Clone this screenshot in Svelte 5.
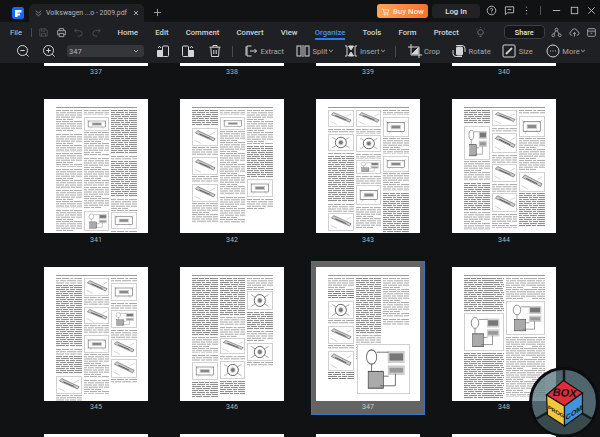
<script>
  // t = text, d = dense text, f = figure with a drawing kind
  const t = (h) => ({ type: "t", h })
  const d = (h) => ({ type: "d", h })
  const f = (h, kind = "box") => ({ type: "f", h, kind })

  const tabs = ["Home", "Edit", "Comment", "Convert", "View", "Organize", "Tools", "Form", "Protect"]

  const pages = [
    { n: 337, cols: [] }, { n: 338, cols: [] }, { n: 339, cols: [] }, { n: 340, cols: [] },
    { n: 341, cols: [
      [t(22), t(18), t(14), t(20), t(18), t(22)],
      [t(5), f(14, "panel"), t(24), t(28), t(22), f(20, "diagram")],
      [d(44), t(4), d(36), t(12), f(17, "panel"), t(10)],
    ] },
    { n: 342, cols: [
      [d(16), f(18, "bar"), t(8), f(18, "bar"), t(6), f(18, "bar"), t(20)],
      [t(5), f(13, "panel"), t(64), t(26)],
      [t(34), d(32), f(18, "panel"), t(10)],
    ] },
    { n: 343, cols: [
      [f(17, "bar"), t(4), f(17, "circle"), t(2), d(46), t(8), f(18, "bar"), t(8)],
      [f(17, "bar"), t(5), f(17, "circle"), t(5), f(14, "diagram"), t(8), f(20, "panel"), t(22)],
      [t(5), f(20, "panel"), t(16), f(16, "panel"), t(18), d(42)],
    ] },
    { n: 344, cols: [
      [d(14), f(34, "diagram"), t(20), d(28), t(18)],
      [f(16, "bar"), t(4), f(20, "bar"), t(8), f(18, "bar"), t(8), f(19, "bar"), t(14)],
      [t(4), f(21, "panel"), t(32), f(20, "bar"), d(34)],
    ] },
    { n: 345, cols: [
      [t(6), d(62), t(6), d(18), f(18, "bar"), t(14)],
      [f(18, "bar"), t(8), f(17, "bar"), t(8), f(18, "panel"), t(24), t(14)],
      [t(4), f(18, "panel"), t(6), f(18, "diagram"), t(8), f(18, "bar"), f(19, "bar"), t(4)],
    ] },
    { n: 346, cols: [
      [d(58), t(16), t(6), f(18, "panel"), d(16)],
      [d(38), t(8), t(10), f(16, "bar"), t(4), f(18, "circle"), d(14)],
      [t(12), f(19, "circle"), d(18), t(10), f(18, "circle"), t(4)],
    ] },
    { n: 347, sel: true, cols: [
      [t(12), d(8), f(18, "circle"), t(4), f(18, "bar"), t(4), f(20, "bar"), d(8)],
      [d(56), t(10), t(12)],
      [t(12), t(26), t(6)],
    ], wide: f(50, "diagram") },
    { n: 348, cols: [
      [d(34), f(38, "diagram"), d(46)],
      [t(22), f(34, "diagram"), t(60)],
    ] },
    { cols: [] }, { cols: [] }, { cols: [] }, { cols: [] },
  ]
</script>

{#snippet drawing(kind)}
  <svg class="fig" viewBox="0 0 30 20" preserveAspectRatio="none">
    {#if kind === "panel"}
      <rect x="4" y="5" width="22" height="10" fill="none" stroke="#555" stroke-width=".7" />
      <rect x="9" y="8" width="12" height="4" fill="#888" />
      <path d="M2 3l5 4M28 3l-5 4M6 18l3-4M24 18l-3-4" stroke="#888" stroke-width=".4" />
    {:else if kind === "bar"}
      <path d="M3 5L26 15l2-3L6 2z" fill="#ccc" stroke="#444" stroke-width=".6" />
      <path d="M8 6l14 6" stroke="#444" stroke-width="1" />
      <path d="M2 14l8 4M28 4l-6 3" stroke="#777" stroke-width=".4" />
    {:else if kind === "circle"}
      <circle cx="15" cy="10" r="7" fill="none" stroke="#444" stroke-width="1" />
      <circle cx="15" cy="10" r="3" fill="#777" />
      <path d="M4 3l5 3M26 3l-5 3M4 17l5-3M26 17l-5-3" stroke="#555" stroke-width=".6" />
    {:else}
      <circle cx="8" cy="5" r="3" fill="none" stroke="#666" stroke-width=".5" />
      <rect x="18" y="3" width="9" height="4" fill="#777" />
      <rect x="18" y="9" width="9" height="3" fill="#999" />
      <rect x="6" y="11" width="9" height="7" fill="#aaa" stroke="#444" stroke-width=".4" />
      <path d="M8 8v3M15 13h3M22 12v5H13M11 3h7" fill="none" stroke="#555" stroke-width=".4" />
    {/if}
  </svg>
{/snippet}

<div class="app">
  <header class="titlebar">
    <svg class="logo" viewBox="0 0 12 12"><rect width="12" height="12" rx="2.5" fill="#1668f5" /><path d="M3 3h6.500v2.600H5.600v1H8v2H5.600V10H3z" fill="#fff" /></svg>
    <div class="tab">
      <svg class="ic10" viewBox="0 0 10 10"><path d="M2 2l3 2.500L8 2M2 5l3 2.500L8 5" /></svg>
      <span class="tabname">Volkswagen ...o - 2009.pdf</span>
      <svg class="ic8" viewBox="0 0 8 8"><path d="M2 2l4 4M6 2L2 6" /></svg>
    </div>
    <svg class="plus" viewBox="0 0 10 10"><path d="M5 1v8M1 5h8" /></svg>
    <div class="spacer"></div>
    <button class="buy">
      <svg viewBox="0 0 10 10"><path d="M1 2h1.400l1 4.500h4.300L8.800 3H2.800" /><circle cx="4" cy="8.300" r=".7" /><circle cx="7.300" cy="8.300" r=".7" /></svg>
      Buy Now
    </button>
    <button class="login">Log In</button>
    <div class="winicons">
      <svg viewBox="0 0 12 12"><circle cx="6" cy="6" r="4.700" /><path d="M4.700 4.800A1.300 1.300 0 1 1 6 6.300V7M6 8.300v.7" /></svg>
      <svg viewBox="0 0 12 12"><path d="M1.500 2h9v6.500H4L1.500 10.500zM4 5h4" /></svg>
      <svg viewBox="0 0 12 12"><path d="M6 1.800v1M6 5.500v1M6 9.200v1" stroke-width="1.300" /></svg>
      <i class="winsep"></i>
      <svg viewBox="0 0 12 12"><path d="M2 6h8" /></svg>
      <svg viewBox="0 0 12 12"><rect x="2.500" y="2.500" width="7" height="7" /></svg>
      <svg viewBox="0 0 12 12"><path d="M2.500 2.500l7 7M9.500 2.500l-7 7" /></svg>
    </div>
  </header>

  <div class="menubar">
    <span class="file">File</span>
    <i class="sep short"></i>
    <div class="quick">
      <svg viewBox="0 0 12 12"><path d="M2 2h6.500L10 3.500V10H2zM4 2v2.500h3.500V2M4 10V7h4v3" /></svg>
      <svg class="on" viewBox="0 0 12 12"><path d="M3.500 4V1.800h5V4M3.500 8.500H1.800V4h8.400v4.500H8.500M3.500 7h5v3.500h-5z" /></svg>
      <svg viewBox="0 0 12 12"><path d="M4 2L2 4l2 2M2 4h5a2.500 2.500 0 0 1 0 6H5" /></svg>
      <svg viewBox="0 0 12 12"><path d="M8 2l2 2-2 2M10 4H5a2.500 2.500 0 0 0 0 6h2" /></svg>
    </div>
    <nav class="tabs">
      {#each tabs as name}
        <span class:active={name === "Organize"}>{name}</span>
      {/each}
    </nav>
    <svg class="bulb" viewBox="0 0 12 12"><path d="M4.500 8.500a3 3 0 1 1 3 0zM5 10.300h2M6 .4v.6M1.400 2l.6.5M10.600 2l-.6.5" /></svg>
    <button class="share">Share</button>
    <div class="rightic">
      <svg viewBox="0 0 12 12"><circle cx="6" cy="2.800" r="1.500" /><circle cx="2.500" cy="9" r="1.500" /><circle cx="9.500" cy="9" r="1.500" /><path d="M5.200 4L3.200 7.700M6.800 4l2 3.700" /></svg>
      <svg viewBox="0 0 12 12"><path d="M3.500 9H3a2.300 2.300 0 0 1-.3-4.500 3.300 3.300 0 0 1 6.400 0A2.300 2.300 0 0 1 9 9h-.5M6 10.500V6M4.300 7.500L6 6l1.700 1.500" /></svg>
      <svg viewBox="0 0 12 12"><rect x="1.800" y="1.800" width="8.400" height="8.400" rx="1" /><path d="M1.800 4.500h8.400M5 6.800h2" /></svg>
    </div>
  </div>

  <div class="toolbar">
    <svg class="tool zoomout" viewBox="0 0 14 14"><circle cx="6.500" cy="6.500" r="5" /><path d="M4.300 6.500h4.400M10.200 10.200l2.300 2.300" /></svg>
    <svg class="tool zoomin" viewBox="0 0 14 14"><circle cx="6.500" cy="6.500" r="5" /><path d="M4.300 6.500h4.400M6.500 4.300v4.400M10.200 10.200l2.300 2.300" /></svg>
    <div class="pagesel">
      <span>347</span>
      <svg viewBox="0 0 8 8"><path d="M2 3l2 2 2-2" /></svg>
    </div>
    <svg class="tool rot1" viewBox="0 0 14 14"><rect x="6.500" y="2" width="6" height="10.500" rx="1" /><path d="M1.500 6.500h5v6h-5z" fill="#d5d5d5" /><path d="M2 4l1.500-1.800L5 4" /></svg>
    <svg class="tool rot2" viewBox="0 0 14 14"><rect x="1.500" y="2" width="6" height="10.500" rx="1" /><path d="M7.500 6.500h5v6h-5z" fill="#d5d5d5" /><path d="M9 4l1.500-1.800L12 4" /></svg>
    <svg class="tool trash" viewBox="0 0 14 14"><path d="M1.500 3.200h11M5 3V1.500h4V3M2.800 3.500l.7 9h7l.7-9M5.800 6v4M8.200 6v4" /></svg>
    <i class="sep tall first"></i>
    <div class="action extract">
      <svg viewBox="0 0 14 14"><path d="M7.500 2H3v10h4.500M2 2.500v9" /><path d="M6 7h6.500M10.500 5l2 2-2 2" /></svg><span>Extract</span>
    </div>
    <div class="action split">
      <svg viewBox="0 0 14 14"><rect x="1" y="2" width="4" height="10" /><rect x="9" y="2" width="4" height="10" /><path d="M7 1v12" /></svg><span>Split</span><b></b>
    </div>
    <div class="action insert">
      <svg viewBox="0 0 14 14"><path d="M1 2h2v10H1M13 2h-2v10h2" /><path d="M4.500 2h5L7 6zM4.500 12h5L7 8z" fill="#d5d5d5" /></svg><span>Insert</span><b></b>
    </div>
    <i class="sep tall"></i>
    <div class="action crop">
      <svg viewBox="0 0 14 14"><path d="M3 0v11h11M0 3h11v11" /><path d="M4 10l6-6v6z" fill="#d5d5d5" /></svg><span>Crop</span>
    </div>
    <div class="action rotate">
      <svg viewBox="0 0 14 14"><rect x="4.500" y="3" width="6" height="8" rx="1" fill="#d5d5d5" /><path d="M4 1.500h6a3 3 0 0 1 3 3V8M10 12.500H4a3 3 0 0 1-3-3V6" /></svg><span>Rotate</span>
    </div>
    <div class="action size">
      <svg viewBox="0 0 14 14"><rect x="1" y="1" width="12" height="12" rx="1" /><path d="M4 10l6-6" stroke-width="1.800" /></svg><span>Size</span>
    </div>
    <div class="action more">
      <svg viewBox="0 0 14 14"><circle cx="7" cy="7" r="6" /><path d="M4 7h.6M6.700 7h.6M9.400 7h.6" stroke-width="1.600" /></svg><span>More</span><b></b>
    </div>
  </div>

  <main class="content">
    <div class="grid">
      {#each pages as page}
        <div class="cell" class:selected={page.sel}>
          <div class="page">
            {#if page.cols.length}
              <div class="pagehead"></div>
              <div class="body">
                {#each page.cols as col}
                  <div class="col">
                    {#each col as block}
                      {#if block.type === "f"}
                        <div class="block figure" style="height: {block.h}px">{@render drawing(block.kind)}</div>
                      {:else}
                        <div class="block {block.type === 'd' ? 'dense' : 'text'}" style="height: {block.h}px"></div>
                      {/if}
                    {/each}
                  </div>
                {/each}
              </div>
              {#if page.wide}
                <div class="block figure wide">{@render drawing(page.wide.kind)}</div>
              {/if}
            {/if}
          </div>
          {#if page.n}
            <span class="num">{page.n}</span>
          {/if}
        </div>
      {/each}
    </div>
  </main>

  <svg class="badge" viewBox="0 0 70 70">
    <circle cx="35" cy="35" r="33.500" fill="#5f7c84" fill-opacity=".8" stroke="#0c0c0e" stroke-width="3" />
    <path d="M35 36L7 52A33 33 0 0 0 63 52z" fill="#39494d" />
    <path d="M35 36V2M35 36L7 52M35 36L63 52" stroke="#15191b" stroke-width="2.500" />
    <path d="M34.500 13.500L53.500 26 35.500 39 17.500 28z" fill="#e02d3c" stroke="#111" stroke-width="1.200" />
    <path d="M17.500 28L35.500 39V59L18.500 48z" fill="#f0c93a" stroke="#111" stroke-width="1.200" />
    <path d="M53.500 26L35.500 39V59L53.500 46z" fill="#3d96dc" stroke="#111" stroke-width="1.200" />
    <text class="bx" transform="translate(35 29.500) rotate(4) skewX(-8)" text-anchor="middle">BOX</text>
    <text class="pr" transform="translate(27 46.500) skewY(30)" text-anchor="middle">PROG</text>
    <text class="cm" transform="translate(45 48) skewY(-34)" text-anchor="middle">COM</text>
  </svg>
</div>

<style>
  :global(body) {
    margin: 0;
    background: #111214;
    font-family: Roboto, "Liberation Sans", sans-serif;
  }

  .app {
    position: relative;
    width: 600px;
    height: 437px;
    overflow: hidden;
    display: flex;
    flex-direction: column;
    color: #d8d8d8;
  }

  svg {
    fill: none;
    stroke: #cfcfcf;
    stroke-width: 1;
    flex: none;
  }

  button {
    font: inherit;
    border: none;
    padding: 0;
  }

  .titlebar {
    height: 22px;
    flex: none;
    display: flex;
    align-items: flex-end;
    background: #111214;
    box-sizing: border-box;
  }

  .logo {
    width: 12px;
    height: 12px;
    margin: 0 5px 3px 12px;
    stroke: none;
  }

  .tab {
    width: 115px;
    height: 18px;
    background: #1f2024;
    border-radius: 5px 5px 0 0;
    display: flex;
    align-items: center;
    padding: 0 4px 0 5px;
    box-sizing: border-box;
  }

  .ic10 {
    width: 9px;
    height: 9px;
    stroke: #888;
  }

  .ic8 {
    width: 8px;
    height: 8px;
    stroke: #aaa;
  }

  .tabname {
    flex: 1;
    font-size: 6.900px;
    color: #b4b4b4;
    margin-left: 3px;
    white-space: nowrap;
  }

  .plus {
    width: 9px;
    height: 9px;
    margin: 0 0 5px 9px;
    stroke: #aaa;
  }

  .spacer {
    flex: 1;
  }

  .buy,
  .login {
    align-self: flex-start;
    margin-top: 4px;
    height: 14px;
    border-radius: 3px;
    font-size: 7.800px;
    font-weight: 500;
    display: flex;
    align-items: center;
    justify-content: center;
  }

  .buy {
    width: 51px;
    gap: 3px;
    color: #ffe9d6;
    background: linear-gradient(90deg, #ffa45a, #f5722d);
  }

  .buy svg {
    width: 9px;
    height: 9px;
    stroke: #ffe9d6;
  }

  .login {
    width: 48px;
    margin-left: 4px;
    margin-right: 5px;
    color: #e0e0e0;
    background: #212225;
  }

  .winicons {
    align-self: flex-start;
    margin-top: 5px;
    display: flex;
    align-items: center;
    width: 115px;
    gap: 6.500px;
    padding-left: 1px;
    box-sizing: border-box;
  }

  .winicons svg {
    width: 11px;
    height: 11px;
    stroke: #bdbdbd;
  }

  .winsep {
    width: 1px;
    height: 9px;
    background: #555;
    margin: 0 4px 0 1px;
  }

  .menubar {
    height: 18px;
    flex: none;
    display: flex;
    align-items: center;
    background: #1f2024;
    font-size: 7.700px;
    font-weight: 500;
    padding-top: 2px;
    box-sizing: border-box;
  }

  .file {
    margin-left: 10px;
    color: #c8c8c8;
    font-weight: 400;
    width: 21px;
    flex: none;
  }

  .sep {
    display: block;
    width: 1px;
    background: #4a4b4f;
    flex: none;
  }

  .sep.short {
    height: 9px;
  }

  .quick {
    display: flex;
    gap: 6.500px;
    margin-left: 6px;
    flex: none;
  }

  .quick svg {
    width: 11px;
    height: 11px;
    stroke: #4e4f53;
  }

  .quick svg.on {
    stroke: #a8a8a8;
  }

  .tabs {
    display: flex;
    gap: 17.200px;
    margin-left: 16px;
    color: #d4d4d4;
    flex: none;
  }

  .tabs span {
    position: relative;
  }

  .tabs .active {
    color: #4a90f0;
  }

  .tabs .active::after {
    content: "";
    position: absolute;
    left: 0;
    right: 0;
    bottom: -3px;
    height: 2px;
    background: #2f7be6;
  }

  .bulb {
    width: 11px;
    height: 11px;
    margin-left: 16.500px;
    stroke: #777;
  }

  .share {
    width: 41px;
    height: 14px;
    margin-left: 17.500px;
    background: #141518;
    color: #e4e4e4;
    border: 1px solid #3c3d41;
    border-radius: 4px;
    font-size: 7.300px;
    font-weight: 500;
    flex: none;
  }

  .rightic {
    display: flex;
    gap: 6.500px;
    margin-left: 6.500px;
    flex: none;
  }

  .rightic svg {
    width: 11px;
    height: 11px;
    stroke: #a5a5a5;
  }

  .toolbar {
    height: 23px;
    flex: none;
    display: flex;
    align-items: center;
    background: #1f2024;
    font-size: 7.600px;
    padding-bottom: 1px;
    box-sizing: border-box;
  }

  .tool {
    width: 14px;
    height: 14px;
    stroke: #d5d5d5;
  }

  .zoomout {
    margin-left: 16px;
  }

  .zoomin {
    margin-left: 12px;
  }

  .pagesel {
    width: 77px;
    height: 12px;
    margin: 0 11px 0 11px;
    background: #35363a;
    border-radius: 3px;
    display: flex;
    align-items: center;
    justify-content: space-between;
    padding: 0 4px 0 2px;
    box-sizing: border-box;
    font-size: 7.500px;
    color: #b5b5b5;
    flex: none;
  }

  .pagesel svg {
    width: 8px;
    height: 8px;
    stroke: #999;
  }

  .rot1 {
    margin-left: 1px;
  }

  .rot2 {
    margin-left: 11px;
  }

  .trash {
    margin-left: 13px;
  }

  .sep.tall {
    height: 11px;
    margin: 0 12px 0 9.500px;
  }

  .sep.tall.first {
    margin: 0 11px 0 10px;
  }

  .action {
    display: flex;
    align-items: center;
    gap: 2.500px;
    color: #a9a9a9;
    flex: none;
  }

  .action svg {
    width: 14px;
    height: 14px;
    stroke: #d5d5d5;
  }

  .action b {
    width: 3px;
    height: 3px;
    margin: -2px 0 0 -1px;
    border-right: 1px solid #999;
    border-bottom: 1px solid #999;
    transform: rotate(45deg) scale(0.8);
  }

  .split {
    margin-left: 12px;
  }

  .insert {
    margin-left: 10.500px;
  }

  .rotate {
    margin-left: 12px;
  }

  .size {
    margin-left: 11.500px;
  }

  .more {
    margin-left: 13px;
  }

  .content {
    flex: 1;
    overflow: hidden;
    background: #111214;
  }

  .grid {
    display: grid;
    grid-template-columns: repeat(4, 114px);
    grid-auto-rows: 154px;
    column-gap: 22px;
    row-gap: 13.500px;
    margin: -137.500px 0 0 39px;
  }

  .cell {
    box-sizing: border-box;
    border: 1px solid transparent;
    padding: 5px 4px 0;
    display: flex;
    flex-direction: column;
    align-items: center;
  }

  .cell.selected {
    background: #646464;
    border-color: #3d73c4;
  }

  .page {
    position: relative;
    width: 104px;
    height: 134px;
    background: #fff;
    flex: none;
    box-sizing: border-box;
    padding: 6px 11px 0 12px;
    overflow: hidden;
  }

  .pagehead {
    height: 2px;
    border-bottom: 1px solid #999;
  }

  .body {
    display: flex;
    gap: 2px;
    margin-top: 2px;
    filter: blur(0.35px);
  }

  .col {
    flex: 1;
    min-width: 0;
    display: flex;
    flex-direction: column;
    gap: 1.500px;
  }

  .block {
    flex: none;
    box-sizing: border-box;
  }

  /* small repeating tiles of broken lines, reads as greeked text at thumbnail scale */
  .text {
    background: url("data:image/svg+xml,%3Csvg xmlns='http://www.w3.org/2000/svg' width='26' height='11'%3E%3Cg stroke='%23a8a8a8' stroke-width='1' fill='none'%3E%3Cpath d='M0 .6h26' stroke-dasharray='5 1 7 1 3 1 8 0'/%3E%3Cpath d='M0 2.800h26' stroke-dasharray='3 1 6 1 9 1 5 0'/%3E%3Cpath d='M0 5h26' stroke-dasharray='8 1 4 1 6 1 5 0'/%3E%3Cpath d='M0 7.200h26' stroke-dasharray='4 1 9 1 4 1 6 0'/%3E%3Cpath d='M0 9.400h17' stroke-dasharray='6 1 3 1 6 0'/%3E%3C/g%3E%3C/svg%3E");
  }

  .dense {
    background: url("data:image/svg+xml,%3Csvg xmlns='http://www.w3.org/2000/svg' width='26' height='8'%3E%3Cg stroke='%23858585' stroke-width='1' fill='none'%3E%3Cpath d='M0 .6h26' stroke-dasharray='6 1 5 1 4 1 8 0'/%3E%3Cpath d='M0 2.600h26' stroke-dasharray='4 1 8 1 3 1 8 0'/%3E%3Cpath d='M0 4.600h26' stroke-dasharray='9 1 3 1 5 1 6 0'/%3E%3Cpath d='M0 6.600h26' stroke-dasharray='3 1 6 1 7 1 7 0'/%3E%3C/g%3E%3C/svg%3E");
  }

  .figure {
    border: 1px solid #d0d0d0;
    display: flex;
  }

  .figure.wide {
    position: absolute;
    left: 41px;
    right: 10px;
    bottom: 7px;
    height: 50px;
    background: #fff;
    filter: blur(0.3px);
  }

  .fig {
    width: 100%;
    height: 100%;
  }

  .num {
    margin-top: 1.500px;
    font-size: 7px;
    line-height: 11px;
    color: #b0b0b0;
  }

  .selected .num {
    color: #c8c8c8;
  }

  .badge {
    position: absolute;
    left: 529px;
    top: 367px;
    width: 70px;
    height: 70px;
    stroke: none;
  }

  .badge text {
    font-family: "Liberation Sans", sans-serif;
    font-weight: 700;
    fill: #111;
    stroke: none;
  }

  .bx {
    font-size: 11px;
  }

  .pr {
    font-size: 5.500px;
  }

  .cm {
    font-size: 7px;
  }
</style>
